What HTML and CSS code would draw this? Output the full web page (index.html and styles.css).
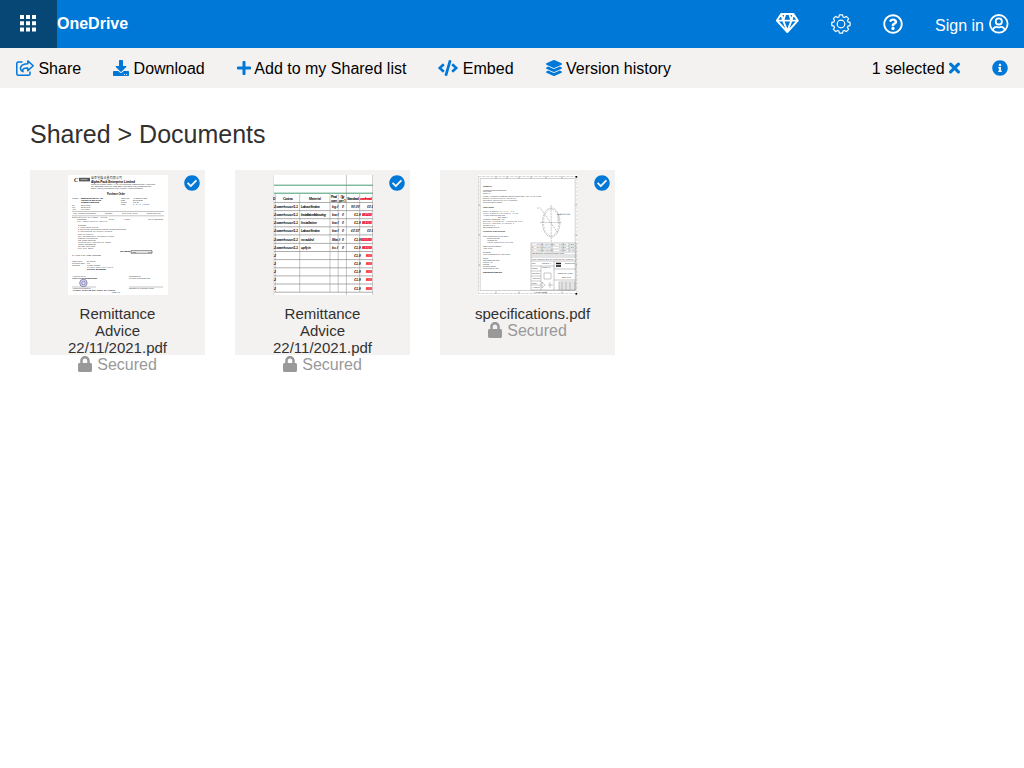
FILE: index.html
```html
<!DOCTYPE html>
<html lang="en">
<head>
<meta charset="utf-8">
<title>OneDrive</title>
<link rel="stylesheet" href="styles.css">
</head>
<body>
<svg class="defs" width="0" height="0">
  <symbol id="check" viewBox="0 0 512 512"><path d="M504 256c0 136.967-111.033 248-248 248S8 392.967 8 256 119.033 8 256 8s248 111.033 248 248zM227.314 387.314l184-184c6.248-6.248 6.248-16.379 0-22.627l-22.627-22.627c-6.248-6.249-16.379-6.249-22.628 0L216 308.118l-70.059-70.059c-6.248-6.248-16.379-6.248-22.628 0l-22.627 22.627c-6.248 6.248-6.248 16.379 0 22.627l104 104c6.249 6.249 16.379 6.249 22.628.001z"/></symbol>
  <symbol id="lock" viewBox="0 0 448 512"><path d="M400 224h-24v-72C376 68.2 307.8 0 224 0S72 68.2 72 152v72H48c-26.5 0-48 21.5-48 48v192c0 26.5 21.5 48 48 48h352c26.5 0 48-21.5 48-48V272c0-26.5-21.5-48-48-48zm-104 0H152v-72c0-39.7 32.3-72 72-72s72 32.3 72 72v72z"/></symbol>
</svg>

<header class="topbar">
  <div class="launcher">
    <svg width="16" height="17" viewBox="0 0 16 17" fill="#fff"><path d="M0 0h4v4H0zM6 0h4v4H6zM12 0h4v4h-4zM0 6.3h4v4H0zM6 6.3h4v4H6zM12 6.3h4v4h-4zM0 12.6h4v4H0zM6 12.6h4v4H6zM12 12.6h4v4h-4z"/></svg>
  </div>
  <div class="brand">OneDrive</div>
  <nav class="top-actions">
    <svg class="gem" width="23" height="20" viewBox="0 0 23 20" fill="none" stroke="#fff" stroke-width="1.9" stroke-linejoin="round"><path d="M5.2 1h12.2L21.8 7.6 11.3 19 .9 7.6zM.9 7.6h20.9M5.2 1l2 6.6L11.3 18l4.2-10.4 1.9-6.6M7.2 7.6L9.4 1M15.5 7.6L13.2 1"/></svg>
    <svg class="gear" width="20" height="20" viewBox="0 0 20 20" fill="none" stroke="#fff" stroke-width="1.2" stroke-linejoin="round"><path d="M16.98 7.87L19.1 8.4V11.6L16.98 12.13 16.44 13.43 17.6 15.3 15.3 17.6 13.43 16.44 12.13 16.98 11.6 19.2H8.4L7.87 16.98 6.57 16.44 4.7 17.6 2.4 15.3 3.56 13.43 3.02 12.13.8 11.6V8.4L3.02 7.87 3.56 6.57 2.4 4.7 4.7 2.4 6.57 3.56 7.87 3.02 8.4.8H11.6L12.13 3.02 13.43 3.56 15.3 2.4 17.6 4.7 16.44 6.57z"/><circle cx="10" cy="10" r="3.8"/></svg>
    <svg class="help" width="20" height="20" viewBox="0 0 512 512" fill="#fff"><path d="M256 8C119.043 8 8 119.083 8 256c0 136.997 111.043 248 248 248s248-111.003 248-248C504 119.083 392.957 8 256 8zm0 448c-110.532 0-200-89.431-200-200 0-110.495 89.472-200 200-200 110.491 0 200 89.471 200 200 0 110.53-89.431 200-200 200zm107.244-255.2c0 67.052-72.421 68.084-72.421 92.863V300c0 6.627-5.373 12-12 12h-45.647c-6.627 0-12-5.373-12-12v-8.659c0-35.745 27.1-50.034 47.579-61.516 17.561-9.845 28.324-16.541 28.324-29.579 0-17.246-21.999-28.693-39.784-28.693-23.189 0-33.894 10.977-48.942 29.969-4.057 5.12-11.46 6.071-16.666 2.124l-27.824-21.098c-5.107-3.872-6.251-11.066-2.644-16.363C184.846 131.491 214.94 112 261.794 112c49.071 0 101.45 38.304 101.45 88.8zM298 368c0 23.159-18.841 42-42 42s-42-18.841-42-42 18.841-42 42-42 42 18.841 42 42z"/></svg>
    <div class="signin"><span>Sign in</span>
      <svg width="20" height="20" viewBox="0 0 20 20" fill="none" stroke="#fff" stroke-width="1.8"><circle cx="9.8" cy="9.8" r="8.8"/><circle cx="9.8" cy="7.4" r="3.1"/><path d="M3.7 16.1C4.5 13.6 6 12.8 7.4 12.8c1 0 1.3.5 2.4.5s1.4-.5 2.4-.5c1.4 0 2.9.8 3.7 3.3"/></svg>
    </div>
  </nav>
</header>

<div class="toolbar">
  <div class="tool"><svg width="18" height="16" viewBox="0 0 18 16" fill="none" stroke="#0078d7" stroke-width="1.5" stroke-linejoin="round" stroke-linecap="round"><path d="M6 2H2.3Q.8 2 .8 3.5v10.2q0 1.5 1.5 1.5h10.2q1.5 0 1.5-1.5V12M11.8.9L17.2 5.7l-5.4 5V7.9C8.3 7.9 6 8.3 7 11.7 2.8 9.4 3.8 3.8 11.8 3.7z"/></svg><span>Share</span></div>
  <div class="tool"><svg width="16" height="16" viewBox="0 0 512 512"><path d="M216 0h80c13.3 0 24 10.7 24 24v168h87.7c17.8 0 26.7 21.5 14.1 34.1L269.7 378.3c-7.5 7.5-19.8 7.5-27.3 0L90.1 226.1c-12.6-12.6-3.7-34.1 14.1-34.1H192V24c0-13.3 10.7-24 24-24zm296 376v112c0 13.3-10.7 24-24 24H24c-13.3 0-24-10.7-24-24V376c0-13.3 10.7-24 24-24h146.7l49 49c20.1 20.1 52.5 20.1 72.6 0l49-49H488c13.3 0 24 10.7 24 24zm-124 88c0-11-9-20-20-20s-20 9-20 20 9 20 20 20 20-9 20-20zm64 0c0-11-9-20-20-20s-20 9-20 20 9 20 20 20 20-9 20-20z"/></svg><span>Download</span></div>
  <div class="tool plus"><svg width="14" height="16" viewBox="0 0 448 512"><path d="M416 208H272V64c0-17.67-14.33-32-32-32h-32c-17.67 0-32 14.33-32 32v144H32c-17.67 0-32 14.33-32 32v32c0 17.67 14.33 32 32 32h144v144c0 17.67 14.33 32 32 32h32c17.67 0 32-14.33 32-32V304h144c17.67 0 32-14.33 32-32v-32c0-17.67-14.33-32-32-32z"/></svg><span>Add to my Shared list</span></div>
  <div class="tool"><svg width="20" height="16" viewBox="0 0 640 512"><path d="M278.9 511.5l-61-17.7c-6.4-1.8-10-8.5-8.2-14.9L346.2 8.7c1.8-6.4 8.5-10 14.9-8.2l61 17.7c6.4 1.8 10 8.5 8.2 14.9L293.8 503.3c-1.9 6.4-8.5 10.1-14.9 8.2zm-114-112.2l43.5-46.4c4.6-4.9 4.3-12.7-.8-17.2L117 256l90.6-79.7c5.1-4.5 5.5-12.3.8-17.2l-43.5-46.4c-4.5-4.8-12.1-5.1-17-.5L3.8 247.2c-5.1 4.7-5.1 12.8 0 17.5l144.1 135.1c4.9 4.6 12.5 4.4 17-.5zm327.2.6l144.1-135.1c5.1-4.7 5.1-12.8 0-17.5L492.1 112.1c-4.8-4.5-12.4-4.3-17 .5L431.6 159c-4.6 4.9-4.3 12.7.8 17.2L523 256l-90.6 79.7c-5.1 4.5-5.5 12.3-.8 17.2l43.5 46.4c4.5 4.9 12.1 5.1 17 .6z"/></svg><span>Embed</span></div>
  <div class="tool"><svg width="16" height="16" viewBox="0 0 512 512"><path d="M12.41 148.02l232.94 105.67c6.8 3.09 14.49 3.09 21.29 0l232.94-105.67c16.55-7.51 16.55-32.52 0-40.03L266.65 2.31a25.607 25.607 0 0 0-21.29 0L12.41 107.98c-16.55 7.51-16.55 32.53 0 40.04zm487.18 88.28l-58.09-26.33-161.64 73.27c-7.56 3.43-15.59 5.17-23.86 5.17s-16.29-1.74-23.86-5.17L70.51 209.97l-58.1 26.33c-16.55 7.5-16.55 32.5 0 40l232.94 105.59c6.8 3.08 14.49 3.08 21.29 0L499.59 276.3c16.55-7.5 16.55-32.5 0-40zm0 127.8l-57.87-26.23-161.86 73.37c-7.56 3.43-15.59 5.17-23.86 5.17s-16.29-1.74-23.86-5.17L70.29 337.87 12.41 364.1c-16.55 7.5-16.55 32.5 0 40l232.94 105.59c6.8 3.08 14.49 3.08 21.29 0L499.59 404.1c16.55-7.5 16.55-32.5 0-40z"/></svg><span>Version history</span></div>
  <div class="selection"><span>1 selected</span><svg width="11" height="16" viewBox="0 0 11 16"><path d="M1.6 4.1l7.8 7.8M9.4 4.1l-7.8 7.8" stroke="#0078d7" stroke-width="3.1" stroke-linecap="round"/></svg></div>
  <svg class="info" width="16" height="16" viewBox="0 0 512 512"><path d="M256 8C119.043 8 8 119.083 8 256c0 136.997 111.043 248 248 248s248-111.003 248-248C504 119.083 392.957 8 256 8zm0 110c23.196 0 42 18.804 42 42s-18.804 42-42 42-42-18.804-42-42 18.804-42 42-42zm56 254c0 6.627-5.373 12-12 12h-88c-6.627 0-12-5.373-12-12v-24c0-6.627 5.373-12 12-12h12v-64h-12c-6.627 0-12-5.373-12-12v-24c0-6.627 5.373-12 12-12h64c6.627 0 12 5.373 12 12v100h12c6.627 0 12 5.373 12 12v24z"/></svg>
</div>

<main class="content">
  <h1 class="crumbs">Shared &gt; Documents</h1>
  <div class="files">
    <article class="card">
      <svg class="check"><use href="#check"/></svg>
      <svg class="thumb" viewBox="0 0 100 120">
        <rect width="100" height="120" fill="#fff"/>
        <g class="order">
          <text x="6" y="6.6" class="logo">C</text><path d="M11 2.8h11v3.6H11z" fill="#555"/><path d="M12.5 4.6h7" stroke="#bbb" stroke-width=".8"/>
          <text x="23" y="4.3" class="cjk" textLength="31">華泰包裝企業有限公司</text>
          <text x="23" y="8" class="strong" textLength="44">Alpha Pack Enterprise Limited</text>
          <text x="23" y="10.3" textLength="64">Room 12, Fortune Centre, 44-48 Yun Ping Road, Causeway Bay, Hong Kong</text>
          <text x="23" y="12.3" textLength="60">Tel: (852) 2890 0000 Fax: (852) 2890 0001 Email: info@alphapack.com</text>
          <text x="23" y="14.2" textLength="52">Email: sales@alphapack.com Website: www.alphapack</text>
          <text x="39" y="20" class="title" textLength="18">Purchase Order</text>
          <text x="4" y="24">Messrs</text><text x="13" y="24" class="dark" textLength="22">Manufacturing Co. Ltd</text><text x="13" y="26" class="dark" textLength="20">Industrial Building</text><text x="13" y="28" class="dark" textLength="18">Kowloon Hong Kong</text>
          <text x="53" y="24">Order No</text><text x="65" y="24">APO2021-0122</text><text x="53" y="26">Date</text><text x="65" y="26">22/11/2021</text><text x="53" y="28">Terms</text><text x="65" y="28">Net 30</text><text x="53" y="30">Page</text><text x="65" y="30" textLength="17">1 of 1 (USD)</text>
          <text x="4" y="31">Tel</text><text x="13" y="31">2345 6789</text><text x="4" y="33.2">Fax</text><text x="13" y="33.2">2345 6790</text><text x="4" y="35.4">Attn</text><text x="13" y="35.4">Mr. Wong</text>
          <path d="M4 36.5h92M4 40.8h92" stroke="#888" stroke-width=".5"/>
          <text x="5" y="39" textLength="23">Item  Product Description</text><text x="37" y="39">Quantity</text><text x="54" y="39" textLength="16">Unit Price  Disc.</text><text x="78" y="39" textLength="15">Amount Delivery</text>
          <text x="4" y="42.6" textLength="35">Order Delivery by Vessel : Prices</text><text x="9" y="44.8">Packaging</text><text x="41" y="44.8">2,000</text><text x="56" y="44.8">0.0500</text><text x="80" y="44.8" textLength="15">100.00 22/12/21</text><text x="9" y="46.8" textLength="30">Poly Bags Quality Option</text>
          <text x="10" y="51">Remarks:</text><text x="10" y="53" textLength="20">1. Plain white boxes</text><text x="10" y="55" textLength="48">2. Deliver the packing slip and the weight documents</text><text x="10" y="57" textLength="34">3. Documents for invoice needed</text>
          <text x="10" y="60" textLength="16">Specification:</text><text x="10" y="62" textLength="36">Ref. Package size: 140x200x0.04mm</text><text x="10" y="64">Material: Polyethylene</text><text x="10" y="66">Ref: Model 500PCS</text><text x="10" y="68" textLength="33">Printing size: 150x200x0.05mm</text><text x="10" y="70">Colour: Transparent</text><text x="10" y="72">Qty/Ctn: 1000 PCS</text><text x="10" y="74">N.W. G.W. 12KG</text>
          <text x="52" y="77.4" class="dark" textLength="10">Net Amount</text><path d="M63 75.7h21v2.5H63z" fill="none" stroke="#333" stroke-width=".6"/><text x="64" y="77.6">USD</text><text x="80" y="77.6">100</text>
          <text x="4" y="81" textLength="29">SAY TOTAL US : ONE HUNDRED</text>
          <text x="4" y="87">Trade Term</text><text x="19" y="87">Ex-works</text><text x="4" y="89">Payment Term</text><text x="19" y="89">T/T</text><text x="4" y="91">Remarks</text><text x="19" y="91">Please confirm</text><text x="19" y="93" textLength="26">Please sign and return</text><text x="19" y="95" class="dark">Delivery: 20/12/2021</text>
          <text x="4" y="102" textLength="14">Authorized by</text><text x="4" y="104.4" class="dark" textLength="25">ALPHA PACK ENTERPRISE</text><text x="61" y="102">Confirmed by</text><text x="61" y="104.4" textLength="21">MANUFACTURING CO</text>
          <circle cx="15.4" cy="108" r="3.7" fill="#dddcf0" stroke="#8a87b7" stroke-width="1"/><circle cx="15.4" cy="108" r="1.8" fill="none" stroke="#8280ad" stroke-width=".8"/>
          <path d="M4 112h24M61 112h34" stroke="#888" stroke-width=".5"/><text x="4" y="114">Authorized Signature</text><text x="61" y="114">Signature &amp; Company Chop</text><text x="5" y="116" class="dark" textLength="42">Please confirm the order by return</text><text x="44" y="117.6">Page 1/1</text>
        </g>
      </svg>
      <div class="name">Remittance Advice 22/11/2021.pdf</div>
      <div class="secured"><svg width="14" height="16"><use href="#lock"/></svg><span>Secured</span></div>
    </article>

    <article class="card">
      <svg class="check"><use href="#check"/></svg>
      <svg class="thumb" viewBox="0 0 100 120">
        <rect width="100" height="120" fill="#fff"/>
        <path d="M0 0v120" stroke="#e4e4e4" stroke-width="2"/>
        <path d="M1 10.2h99M1 18.2h99" stroke="#479c70" stroke-width="1"/>
        <path d="M1 27.5h99M1 35.6h99M1 43.7h99M1 51.8h99M1 59.9h99M1 68.4h99M1 76.5h99M1 84.6h99M1 92.8h99M1 100.9h99M1 109h99M1 117.2h99" stroke="#777" stroke-width=".6"/>
        <path d="M2.2 19v98M26.7 19v98M57 19v98M65.2 19v98M73.4 0v120M86.7 19v98M99.7 0v120" stroke="#888" stroke-width=".5"/>
        <g class="sheet">
          <text x="0" y="24.5">D</text><text x="10" y="24.5" textLength="10">Cost no</text><text x="36" y="24.5" textLength="12">Material</text><text x="58" y="22.7" textLength="6">Prod</text><text x="58" y="26.5" textLength="6">uom</text><text x="67.5" y="22.7" textLength="4">Qty</text><text x="66" y="26.5" textLength="7">per 1</text><text x="74" y="24.5" textLength="12">Standard</text><text x="87" y="24.5" class="red" textLength="12">overhead</text>
        </g>
        <g class="rows">
          <text x="1" y="33" textLength="24">2.warehouse/1.1</text><text x="28" y="33" textLength="19">Labour Section</text><text x="59" y="33">kg.f</text><text x="69" y="33">0</text><text x="78" y="33">¥0.00</text><text x="94" y="33">€0.0</text>
          <text x="1" y="41.2" textLength="24">2.warehouse/1.1</text><text x="28" y="41.2" textLength="25">Installation/labour/og</text><text x="59" y="41.2">kw.f</text><text x="69" y="41.2">0</text><text x="81" y="41.2">€1.9</text><text x="89" y="41.2" class="red" textLength="10">¥81430</text>
          <text x="1" y="49.3" textLength="24">2.warehouse/1.1</text><text x="28" y="49.3" textLength="16">Installation</text><text x="59" y="49.3">kw.f</text><text x="69" y="49.3">0</text><text x="81" y="49.3">€1.9</text><text x="89" y="49.3" class="red" textLength="10">¥61050</text>
          <text x="1" y="57.3" textLength="24">2.warehouse/1.1</text><text x="28" y="57.3" textLength="19">Labour Section</text><text x="59" y="57.3">kw.f</text><text x="69" y="57.3">0</text><text x="78" y="57.3">£0.57</text><text x="94" y="57.3">€0.0</text>
          <text x="1" y="65.5" textLength="24">2.warehouse/1.1</text><text x="28" y="65.5" textLength="13">no added</text><text x="59" y="65.5">Mat.f</text><text x="69" y="65.5">0</text><text x="81" y="65.5">€1.9</text><text x="88" y="65.5" class="red" textLength="11">¥101050</text>
          <text x="1" y="73.7" textLength="24">2.warehouse/1.1</text><text x="28" y="73.7" textLength="10">upfly in</text><text x="59" y="73.7">ks.f</text><text x="69" y="73.7">0</text><text x="81" y="73.7">€1.9</text><text x="89" y="73.7" class="red" textLength="10">¥81058</text>
          <text x="1" y="82">2</text><text x="81" y="82">€1.9</text><text x="93" y="82" class="red">¥08</text>
          <text x="1" y="90">2</text><text x="81" y="90">€1.9</text><text x="93" y="90" class="red">¥08</text>
          <text x="1" y="98.2">2</text><text x="81" y="98.2">€1.9</text><text x="93" y="98.2" class="red">¥08</text>
          <text x="1" y="106.3">2</text><text x="81" y="106.3">€1.9</text><text x="93" y="106.3" class="red">¥08</text>
          <text x="1" y="114.5">2</text><text x="81" y="114.5">€1.9</text><text x="93" y="114.5" class="red">¥08</text>
        </g>
      </svg>
      <div class="name">Remittance Advice 22/11/2021.pdf</div>
      <div class="secured"><svg width="14" height="16"><use href="#lock"/></svg><span>Secured</span></div>
    </article>

    <article class="card">
      <svg class="check"><use href="#check"/></svg>
      <svg class="thumb" viewBox="0 0 100 120">
        <rect width="100" height="120" fill="#fff"/>
        <path d="M.5 1.5h98.5v117H.5z" fill="none" stroke="#aaa" stroke-width=".5" stroke-dasharray="3 1"/>
        <path d="M2.2 3.5h95v112h-95z" fill="none" stroke="#999" stroke-width=".45"/>
        <path d="M18 1.5v2M29 1.5v2M41 1.5v2M53 1.5v2M68 1.5v2M84 1.5v2M18 116.5v2M41 116.5v2M68 116.5v2M84 116.5v2M.5 30h1.5M.5 60h1.5M.5 90h1.5M97.5 30H99M97.5 60H99M97.5 90H99" stroke="#777" stroke-width=".6"/>
        <rect x="97.5" y="1" width="1.7" height="1.7"/><rect x="97.5" y="118" width="1.7" height="1.7"/>
        <g class="spec">
          <text x="5" y="11.5" class="dark">GENERAL</text>
          <text x="5" y="15.5">Product Requirements Ring</text><text x="5" y="17.4">Inner Part</text><text x="5" y="19.3">Outer 44</text><text x="5" y="21.5" textLength="58">Finish: Anodised or Natural Material thickness (Avg) +0.01/-0.005</text><text x="5" y="23.5" textLength="33">Edges without burrs, deburred</text><text x="5" y="25.5" textLength="34">Tolerance applied for all in drawing</text><text x="5" y="27.5">General edges 0.2mm</text>
          <text x="5" y="33" class="dark">Other notes:</text><text x="5" y="37" textLength="31">Outer diameter 44 +0.1 / -0.1</text><text x="5" y="39" textLength="35">Inner diameter tolerance +0.05</text><text x="5" y="41">All burr removed from ring</text><text x="20" y="43">See detail A</text><text x="5" y="45">Height 1.0 thickness +0.2</text><text x="5" y="47" textLength="39">Surface treatment: Anodising 10u</text><text x="5" y="49" textLength="31">Colour: Natural or Black 1</text><text x="5" y="51">Ra max 0.8 All</text><text x="5" y="53">Specification 2 of 2</text>
          <text x="5" y="56.8" class="dark" textLength="22">Cleaning instructions</text><text x="5" y="61.5" textLength="25">Test conditions and at NRR</text><text x="9" y="63.5">Room temp 22</text><text x="9" y="65.5">Humidity 50</text><text x="9" y="67.5" textLength="26">Visual inspection 100 pcs</text><text x="5" y="71.5">Other notes to NORM</text><text x="5" y="73.5">Apply to all</text><text x="5" y="77.5">Remarks</text><text x="5" y="79.5" textLength="27">Keep packaging dry and clean</text>
          <text x="5" y="83.5">Notes</text><text x="5" y="85.5">Test inspection part</text><text x="5" y="87.5">Part no. 42</text><text x="5" y="89.5">Part 55</text><text x="5" y="91.5">Revision 12/20</text><text x="5" y="93.5">Final check by QC</text><text x="5" y="97.5" class="dark" textLength="19">Dimensions in mm only</text>
          <text x="80" y="39.6" textLength="12">DETAIL A 2:1</text>
        </g>
        <g fill="none" stroke="#888" stroke-width=".45">
          <ellipse cx="73.2" cy="47.5" rx="8.7" ry="14.5" stroke-dasharray="3 .6"/><ellipse cx="73.2" cy="47.5" rx="7.6" ry="13.2" stroke-dasharray="1.5 1.5"/>
          <path d="M73.2 30v37M62 47.5h22M63 34l17 24M59 33h4M80 39v9M79 39h13" stroke-dasharray="2 .7"/>
          <path d="M53 68h45v47H53zM53 71h45M53 74h45M53 77h45M53 80h45M53 82h45M64 68v9M74 68v9M85 68v9M91 68v9M53 86h45M53 91h24M53 96h10M53 101h10M53 106h10M53 110h10M63 91v24M76 86v29M76 94h22M76 105h22M81 107h16v8H81zM84 107v8M88 107v8M92 107v8M81 109h16M81 111h16M81 113h16"/>
          <path d="M66 98h7v6h-7zM64 107l3 3-3 3zM72 107v6M70 110h5"/>
        </g>
        <path d="M78 88.5h5M78 91h5" stroke="#111" stroke-width="1.7"/>
        <g class="spec"><text x="54" y="70.4" textLength="42">A   Initial Release    01/20   ABC</text><text x="54" y="73.4" textLength="42">B   Revised tol.       04/20   ABC</text><text x="54" y="76.4" textLength="42">C   Finish update      09/21   XYZ</text><text x="54" y="79.4">ISO 2768-mK General tolerance notes</text><text x="54" y="84.8" textLength="42">This drawing and all contents are property</text><text x="64" y="89">Material Al.</text><text x="87" y="89">Drawing No</text><text x="64" y="92.8">Finish 1:1</text><text x="80" y="99">SPECIFICATION</text><text x="84" y="102.6">SPC-0045</text><text x="54" y="89">Title</text><text x="54" y="94">Drawn</text><text x="54" y="99">Checked</text><text x="54" y="104">Approved</text><text x="54" y="109">Scale</text><text x="54" y="113">A4 sheet</text><text x="55" y="118">A4 DOCUMENT</text></g>
      </svg>
      <div class="name">specifications.pdf</div>
      <div class="secured"><svg width="14" height="16"><use href="#lock"/></svg><span>Secured</span></div>
    </article>
  </div>
</main>
</body>
</html>
```
FILE: styles.css
```css
* { box-sizing: border-box; }
body { margin: 0; background: #fff; color: #000; font: 16px/20px "Liberation Sans", Arial, sans-serif; }
svg { display: block; flex: none; }
.defs { display: none; }
.topbar { display: flex; align-items: center; height: 48px; background: #0078d7; color: #fff; }
.launcher { display: flex; align-items: center; justify-content: center; width: 57px; height: 48px; padding: 0 1px 1px 0; background: #064775; }
.brand { font-weight: 700; }
.top-actions { display: flex; align-items: center; height: 48px; margin-left: auto; padding: 0 15px 1px 0; }
.gem { margin-bottom: 1px; }
.gear { margin-left: 32px; margin-top: 1px; }
.help { margin-left: 32px; }
.signin { display: flex; align-items: center; gap: 5px; margin-left: 32px; }
.signin span { padding-top: 4px; }
.toolbar { display: flex; align-items: center; gap: 32px; height: 40px; padding: 0 16px; background: #f3f2f1; }
.toolbar svg { fill: #0078d7; }
.toolbar .tool svg[fill="none"] { fill: none; }
.tool, .selection { display: flex; align-items: center; gap: 4.45px; white-space: nowrap; }
.tool span, .selection span { padding-top: 2px; }
.tool.plus { gap: 3.6px; }
.selection { margin-left: auto; }
.content { padding: 30px; }
.crumbs { margin: 0 0 20px; font-size: 25px; font-weight: 400; line-height: 32px; color: #323130; }
.files { display: flex; gap: 30px; }
.card { position: relative; width: 175px; height: 185px; padding: 5px 35px 0; background: #f3f2f1; }
.check { position: absolute; top: 5px; right: 5px; width: 16px; height: 16px; fill: #0078d7; }
.thumb { width: 100px; height: 120px; margin: 0 auto 10px; overflow: hidden; }
.name { color: #323130; font-size: 15px; line-height: 17px; text-align: center; }
.secured { display: flex; justify-content: center; align-items: center; gap: 5px; height: 17px; color: #999; }
.secured svg { margin-bottom: 2px; fill: #999; }
.thumb text { font-family: "Liberation Sans", Arial, sans-serif; white-space: pre; }
.order text { font-size: 2px; fill: #333; }
.order .dark { font-weight: 700; fill: #000; }
.order .strong { font-size: 3.2px; font-weight: 700; fill: #000; }
.order .title { font-size: 2.6px; font-weight: 700; fill: #111; }
.order .logo { font: italic 700 6px "Liberation Serif", serif; fill: #222; }
.order .cjk { font-family: "Noto Sans CJK TC", sans-serif; font-size: 3px; }
.sheet text, .rows text { font-size: 3.5px; font-weight: 700; fill: #111; }
.rows text { font-style: italic; }
.sheet .red, .rows .red { fill: #f00020; stroke: #f00020; stroke-width: .2px; }
.spec text { font-size: 1.9px; fill: #333; }
.spec .dark { font-weight: 700; fill: #111; }
```
